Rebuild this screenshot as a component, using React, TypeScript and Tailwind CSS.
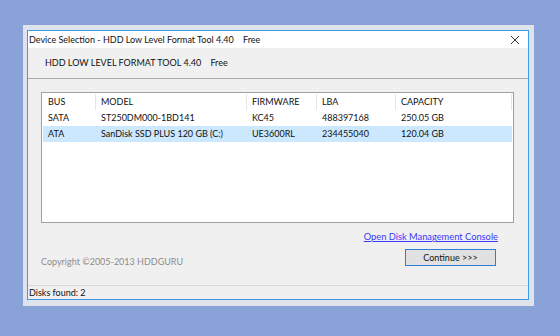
import React from 'react';

const disks = [
  { bus: 'SATA', model: 'ST250DM000-1BD141', fw: 'KC45', lba: '488397168', cap: '250.05 GB', selected: false },
  { bus: 'ATA', model: 'SanDisk SSD PLUS 120 GB (C:)', fw: 'UE3600RL', lba: '234455040', cap: '120.04 GB', selected: true },
];

const cols = 'grid grid-cols-[53px_151px_70px_79px_1fr]';

const App = () => {
  return (
    <div
      className="w-[560px] h-[336px] bg-[#89a3d9] pt-[25px] pl-[23px] text-[9px] text-[#111] whitespace-nowrap"
      style={{ fontFamily: 'Lato, "Open Sans", sans-serif' }}
    >
      {/* window shadow frame */}
      <div className="w-[511px] h-[281px] bg-[#dfe3ec] pt-[5px] pl-[4px]">
        <div className="w-[502px] h-[270px] border border-[#3f9ae8] bg-[#f0f0f0] flex flex-col">
          {/* title bar */}
          <div className="h-[17px] bg-white flex items-center justify-between pl-[1px] pr-[8px]">
            <span className="leading-none">Device Selection - HDD Low Level Format Tool 4.40&nbsp;&nbsp;&nbsp;&nbsp;Free</span>
            <svg width="10" height="10" viewBox="0 0 10 10" className="mt-[1px]">
              <path d="M1 1 L9 9 M9 1 L1 9" stroke="#333" strokeWidth="1" />
            </svg>
          </div>

          {/* header */}
          <div className="h-[31px] flex items-center pl-[17px] border-b border-[#a9a9a9]">
            <span>HDD LOW LEVEL FORMAT TOOL 4.40&nbsp;&nbsp;&nbsp;&nbsp;Free</span>
          </div>

          {/* body */}
          <div className="flex-1 flex flex-col px-[13px] pt-[13px]">
            <div className="h-[131px] bg-white border border-[#a0a0a0] mr-[1px] p-px">
              <div className={`${cols} h-[16px] items-center`}>
                {['BUS', 'MODEL', 'FIRMWARE', 'LBA', 'CAPACITY'].map((h) => (
                  <div key={h} className="h-full flex items-center pl-[5px] border-r border-[#e5e5e5]">
                    {h}
                  </div>
                ))}
              </div>
              {disks.map((d) => (
                <div
                  key={d.bus}
                  className={`${cols} h-[16px] items-center ${d.selected ? 'bg-[#cce8ff]' : ''}`}
                >
                  <div className="pl-[5px]">{d.bus}</div>
                  <div className="pl-[5px]">{d.model}</div>
                  <div className="pl-[5px]">{d.fw}</div>
                  <div className="pl-[5px]">{d.lba}</div>
                  <div className="pl-[5px]">{d.cap}</div>
                </div>
              ))}
            </div>

            <div className="flex justify-end mt-[7px] pr-[17px]">
              <span className="text-[#3838ff] underline leading-[14px] text-[9.3px]">Open Disk Management Console</span>
            </div>

            <div className="flex items-end justify-between mt-[5px] pr-[19px]">
              <span className="text-[#8c8c8c] leading-[14px] mb-[-3px]">Copyright ©2005-2013 HDDGURU</span>
              <button className="w-[91px] h-[17px] border border-[#2f7fd6] bg-[#e1e1e1] flex items-center justify-center leading-none">
                Continue &gt;&gt;&gt;
              </button>
            </div>
          </div>

          {/* status bar */}
          <div className="h-[14px] border-t border-[#d7d7d7] flex items-center pl-[1px]">
            <span className="leading-none">Disks found: 2</span>
          </div>
        </div>
      </div>
    </div>
  );
};

export default App;
